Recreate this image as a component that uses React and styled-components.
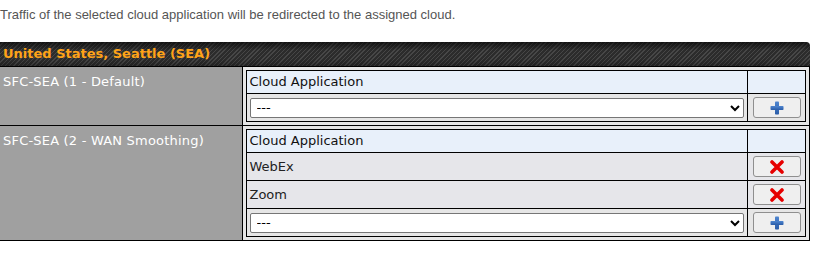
import React from "react";
import styled, { createGlobalStyle } from "styled-components";

const GlobalStyle = createGlobalStyle`
  html, body { margin: 0; padding: 0; background: #fff; }
  body { font-family: "DejaVu Sans", Verdana, sans-serif; }
`;

const Page = styled.div`
  width: 819px;
`;

const Note = styled.p`
  margin: 0;
  padding: 7px 0 0 0;
  height: 42px;
  box-sizing: border-box;
  font-family: "Liberation Sans", Arial, sans-serif;
  font-size: 13px;
  line-height: 15px;
  color: #555;
`;

const OuterTable = styled.table`
  width: 810px;
  border-collapse: collapse;
  table-layout: fixed;
`;

const LabelCol = styled.col`
  width: 242px;
`;

const HeaderCell = styled.th`
  height: 24px;
  padding: 0 3px;
  text-align: left;
  font-size: 13px;
  line-height: 16px;
  font-weight: bold;
  color: #ffa318;
  border-bottom: 1px solid #000;
  border-top-right-radius: 4px;
  background:
    linear-gradient(to bottom, rgba(0,0,0,0.6) 0%, rgba(0,0,0,0) 35%, rgba(0,0,0,0) 70%, rgba(0,0,0,0.25) 100%),
    repeating-linear-gradient(135deg, #2c2c2c 0px, #2c2c2c 2px, #474747 2px, #474747 3px);
`;

const LabelCell = styled.td`
  background: #a0a0a0;
  color: #fff;
  font-size: 13px;
  line-height: 16px;
  letter-spacing: 0.2px;
  vertical-align: top;
  padding: 7px 3px;
  border: 1px solid #000;
  border-left: none;
`;

const ContentCell = styled.td`
  background: #e6e6e6;
  padding: 3px;
  border: 1px solid #000;
  vertical-align: top;
`;

const InnerTable = styled.table`
  width: 100%;
  border-collapse: collapse;
  table-layout: fixed;
`;

const ActionCol = styled.col`
  width: 58px;
`;

const InnerHead = styled.td`
  height: 22px;
  padding: 0 3px;
  background: #e8f0fa;
  border: 1px solid #000;
  font-size: 13px;
  line-height: 16px;
  color: #111;
`;

const InnerCell = styled.td`
  height: 27px;
  padding: 0 3px;
  background: ${(p) => (p.$item ? "#e6e6ea" : "#e6e6e6")};
  border: 1px solid #000;
  font-size: 13px;
  line-height: 16px;
  color: #222;
  vertical-align: middle;
  ${(p) => (p.$action ? "text-align: center;" : "")}
`;

const Select = styled.select`
  width: 100%;
  height: 20px;
  font-family: "DejaVu Sans", Verdana, sans-serif;
  font-size: 13px;
  color: #000;
  background: #fff;
  border: 1px solid #767676;
  border-radius: 2px;
  padding: 0 2px;
  display: block;
`;

const IconButton = styled.button`
  width: 48px;
  height: 21px;
  padding: 0;
  margin: 0 auto;
  display: flex;
  align-items: center;
  justify-content: center;
  background: #efefef;
  border: 1px solid #8f8f8f;
  border-radius: 3px;
`;

const PlusIcon = () => (
  <svg width="14" height="14" viewBox="0 0 14 14">
    <defs>
      <linearGradient id="pg" x1="0" y1="0" x2="0" y2="1">
        <stop offset="0" stopColor="#4f86d0" />
        <stop offset="1" stopColor="#2a5ca8" />
      </linearGradient>
    </defs>
    <rect x="5" y="0.5" width="4" height="13" rx="0.8" fill="url(#pg)" />
    <rect x="0.5" y="5" width="13" height="4" rx="0.8" fill="url(#pg)" />
  </svg>
);

const CrossIcon = () => (
  <svg width="14" height="14" viewBox="0 0 14 14">
    <path d="M2 2 L12 12 M12 2 L2 12" stroke="#e60000" strokeWidth="3.6" strokeLinecap="round" />
  </svg>
);

const groups = [
  { name: "SFC-SEA (1 - Default)", apps: [] },
  { name: "SFC-SEA (2 - WAN Smoothing)", apps: ["WebEx", "Zoom"] },
];

export default function App() {
  return (
    <Page>
      <GlobalStyle />
      <Note>Traffic of the selected cloud application will be redirected to the assigned cloud.</Note>
      <OuterTable>
        <colgroup>
          <LabelCol />
          <col />
        </colgroup>
        <thead>
          <tr>
            <HeaderCell colSpan={2}>United States, Seattle (SEA)</HeaderCell>
          </tr>
        </thead>
        <tbody>
          {groups.map((g) => (
            <tr key={g.name}>
              <LabelCell>{g.name}</LabelCell>
              <ContentCell>
                <InnerTable>
                  <colgroup>
                    <col />
                    <ActionCol />
                  </colgroup>
                  <tbody>
                    <tr>
                      <InnerHead>Cloud Application</InnerHead>
                      <InnerHead />
                    </tr>
                    {g.apps.map((a) => (
                      <tr key={a}>
                        <InnerCell $item>{a}</InnerCell>
                        <InnerCell $item $action>
                          <IconButton><CrossIcon /></IconButton>
                        </InnerCell>
                      </tr>
                    ))}
                    <tr>
                      <InnerCell>
                        <Select defaultValue="">
                          <option value="">---</option>
                          <option value="webex">WebEx</option>
                          <option value="zoom">Zoom</option>
                        </Select>
                      </InnerCell>
                      <InnerCell $action>
                        <IconButton><PlusIcon /></IconButton>
                      </InnerCell>
                    </tr>
                  </tbody>
                </InnerTable>
              </ContentCell>
            </tr>
          ))}
        </tbody>
      </OuterTable>
    </Page>
  );
}
